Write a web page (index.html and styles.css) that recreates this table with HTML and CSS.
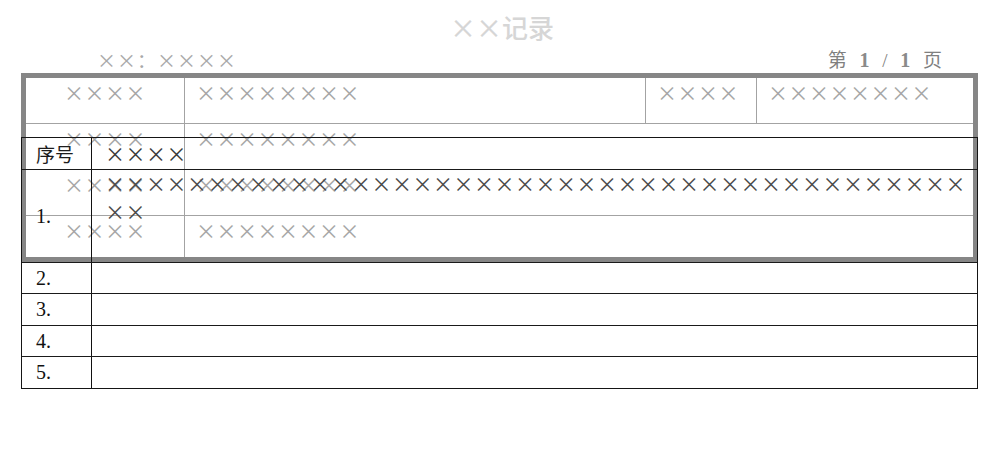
FILE: index.html
```html
<!DOCTYPE html>
<html lang="zh">
<head>
<meta charset="utf-8">
<link rel="stylesheet" href="styles.css">
</head>
<body>
<div class="page">
  <div class="title">××记录</div>
  <div class="meta">
    <span class="meta-left">××：××××</span>
    <span class="meta-right">第 <span class="num">1</span> / <span class="num">1</span> 页</span>
  </div>
  <div class="stack">
    <div class="hdr">
      <div class="hrow r1">
        <div class="hc c1">××××</div>
        <div class="hc">××××××××</div>
        <div class="hc">××××</div>
        <div class="hc">××××××××</div>
      </div>
      <div class="hrow">
        <div class="hc c1">××××</div>
        <div class="hc">××××××××</div>
      </div>
      <div class="hrow">
        <div class="hc c1">××××</div>
        <div class="hc">××××××××</div>
      </div>
      <div class="hrow last">
        <div class="hc c1">××××</div>
        <div class="hc">××××××××</div>
      </div>
    </div>
    <div class="tbl">
      <div class="trow head">
        <div class="tc no">序号</div>
        <div class="tc txt">××××</div>
      </div>
      <div class="trow big">
        <div class="tc no num-cell">1.</div>
        <div class="tc txt multi">××××××××××××××××××××××××××××××××××××××××××<br>××</div>
      </div>
      <div class="trow h31">
        <div class="tc no num-cell">2.</div>
        <div class="tc"></div>
      </div>
      <div class="trow h32">
        <div class="tc no num-cell">3.</div>
        <div class="tc"></div>
      </div>
      <div class="trow h31">
        <div class="tc no num-cell">4.</div>
        <div class="tc"></div>
      </div>
      <div class="trow h32 end">
        <div class="tc no num-cell">5.</div>
        <div class="tc"></div>
      </div>
    </div>
  </div>
</div>
</body>
</html>
```
FILE: styles.css
```css
html, body {
  margin: 0;
  padding: 0;
  background: #ffffff;
}
body {
  width: 1000px;
  height: 460px;
  overflow: hidden;
  font-family: "Noto Sans CJK SC", "Liberation Sans", sans-serif;
}
.page {
  padding-top: 10px;
}
.title {
  height: 34px;
  line-height: 34px;
  font-size: 26px;
  text-align: center;
  color: #d6d6d6;
  font-weight: 500;
  font-feature-settings: "fwid" 1;
  padding-left: 4px;
}
.meta {
  display: flex;
  justify-content: space-between;
  margin-top: 4px;
  height: 24px;
  line-height: 24px;
  font-size: 19px;
  padding-left: 97px;
  padding-right: 58px;
}
.meta-left {
  color: #a9a9a9;
  font-feature-settings: "fwid" 1;
  letter-spacing: 1px;
}
.meta-right {
  color: #7f7f7f;
  font-family: "Liberation Serif", "Noto Sans CJK SC", serif;
  white-space: pre;
  word-spacing: 8px;
}
.meta-right .num {
  font-family: "Liberation Serif", serif;
  font-size: 20px;
  font-weight: bold;
  color: #8a8a8a;
}
.stack {
  display: grid;
  margin-top: 1px;
}
.hdr, .tbl {
  grid-area: 1 / 1;
}
.hdr {
  margin-left: 21px;
  width: 957px;
  height: 189px;
  box-sizing: border-box;
  border: 5px solid #868686;
  display: flex;
  flex-direction: column;
}
.hrow {
  display: grid;
  grid-template-columns: 158px 461px 111px 1fr;
  height: 46px;
  box-sizing: border-box;
  border-bottom: 1px solid #a3a3a3;
}
.hrow.last {
  flex: 1;
  border-bottom: none;
}
.hrow:not(.r1) {
  grid-template-columns: 158px 1fr;
}
.hc {
  border-left: 1px solid #a3a3a3;
  padding-left: 11px;
  padding-top: 3px;
  font-size: 20px;
  line-height: 24px;
  color: #a6a6a6;
  letter-spacing: 0.5px;
  font-feature-settings: "fwid" 1;
  white-space: nowrap;
}
.hc.c1 {
  border-left: none;
  padding-left: 0;
  text-align: center;
}
.tbl {
  margin-top: 64px;
  margin-left: 21px;
  width: 957px;
  align-self: start;
  box-sizing: border-box;
  border: 1px solid #151515;
  display: flex;
  flex-direction: column;
}
.trow {
  display: grid;
  grid-template-columns: 69px 1fr;
  box-sizing: border-box;
  border-bottom: 1px solid #1a1a1a;
}
.trow.end {
  border-bottom: none;
}
.trow.head { height: 32px; }
.trow.big { height: 93px; }
.trow.h31 { height: 31px; }
.trow.h32 { height: 32px; }
.trow.end { height: 31px; }
.tc {
  display: flex;
  align-items: center;
  font-size: 20px;
  color: #1c1c1c;
}
.tc + .tc {
  border-left: 1px solid #111111;
}
.no {
  padding-left: 14px;
  font-size: 19px;
}
.num-cell {
  font-family: "Liberation Serif", serif;
  font-size: 20px;
  padding-left: 14px;
  color: #111;
}
.txt {
  padding-left: 13px;
  color: #3a3a3a;
  letter-spacing: 0.5px;
  font-feature-settings: "fwid" 1;
  white-space: nowrap;
}
.txt.multi {
  align-items: flex-start;
  line-height: 28px;
  padding-top: 0;
  color: #4a4a4a;
}
```
